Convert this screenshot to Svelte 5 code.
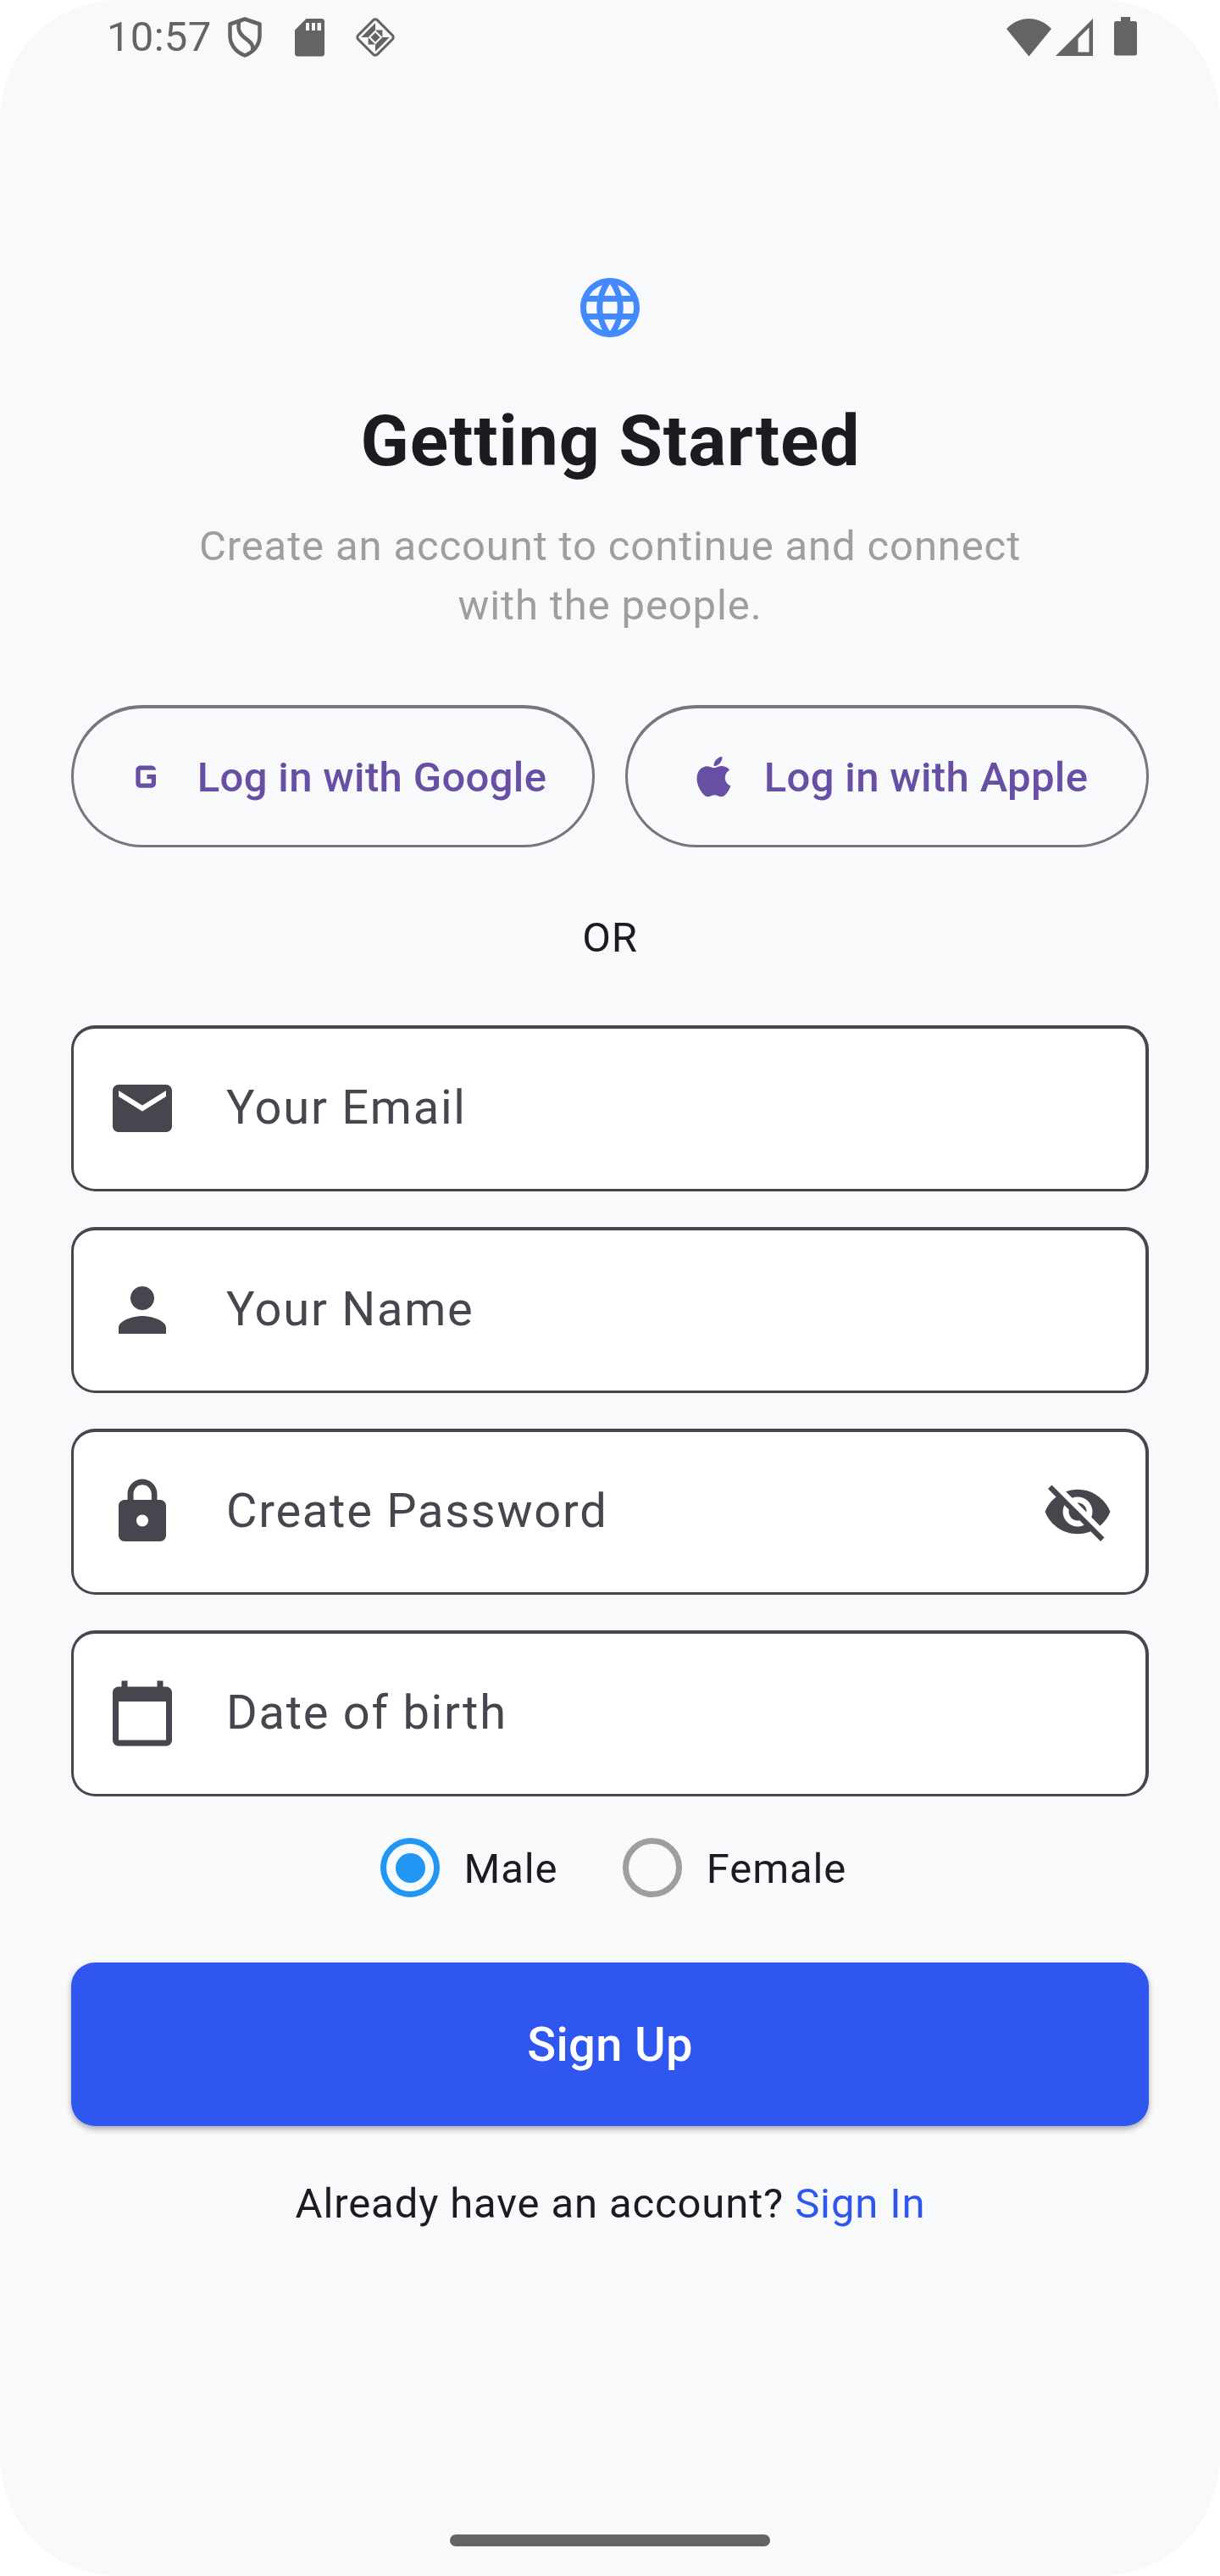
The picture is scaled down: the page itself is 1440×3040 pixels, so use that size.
<script>
  const fields = [
    { icon: 'mail', label: 'Your Email' },
    { icon: 'person', label: 'Your Name' },
    { icon: 'lock', label: 'Create Password', hidden: true },
    { icon: 'calendar', label: 'Date of birth' },
  ];

  const icons = {
    mail: 'M20 4H4c-1.1 0-1.99.9-1.99 2L2 18c0 1.1.9 2 2 2h16c1.1 0 2-.9 2-2V6c0-1.1-.9-2-2-2zm0 4l-8 5-8-5V6l8 5 8-5v2z',
    person: 'M12 12c2.21 0 4-1.79 4-4s-1.79-4-4-4-4 1.79-4 4 1.79 4 4 4zm0 2c-2.67 0-8 1.34-8 4v2h16v-2c0-2.66-5.33-4-8-4z',
    lock: 'M18 8h-1V6c0-2.76-2.24-5-5-5S7 3.24 7 6v2H6c-1.1 0-2 .9-2 2v10c0 1.1.9 2 2 2h12c1.1 0 2-.9 2-2V10c0-1.1-.9-2-2-2zm-6 9c-1.1 0-2-.9-2-2s.9-2 2-2 2 .9 2 2-.9 2-2 2zM9 8V6c0-1.71 1.29-3.1 3-3.1s3.1 1.39 3.1 3.1v2H9z',
    calendar: 'M20 3h-1V1h-2v2H7V1H5v2H4c-1.1 0-2 .9-2 2v16c0 1.1.9 2 2 2h16c1.1 0 2-.9 2-2V5c0-1.1-.9-2-2-2zm0 18H4V8h16v13z',
  };

  let gender = $state('Male');
</script>

<div class="screen">
  <header class="status">
    <span class="time">10:57</span>
    <svg class="shield" viewBox="0 0 40 48" fill="none" stroke="currentColor" stroke-width="4.5" stroke-linejoin="round">
      <path d="M20 2.500L2.500 8.500V22C2.500 33 9.500 41.500 20 45.500C30.500 41.500 37.500 33 37.500 22V8.500Z" />
      <path d="M13.500 4C11.500 13 12.500 18.500 18.500 23.500C26 29.500 31 32 29 40" />
    </svg>
    <svg class="sd" viewBox="0 0 35 45" fill="currentColor">
      <path fill-rule="evenodd" d="M13.500 0H31.500A3.500 3.500 0 0 1 35 3.500V41A3.500 3.500 0 0 1 31.500 44.500H3.500A3.500 3.500 0 0 1 0 41V13.500ZM13 5V14H17V5ZM20 5V14H24V5ZM26.500 5V14H31V5Z" />
    </svg>
    <svg class="diamond" viewBox="0 0 50 50">
      <rect x="9" y="9" width="32" height="32" rx="3.500" transform="rotate(45 25 25)" fill="none" stroke="currentColor" stroke-width="3" />
      <path fill="currentColor" d="M25 8.300V16.600H16.700ZM16.700 16.600V25H8.300ZM33.400 25H41.700L33.400 33.400ZM25 33.400H33.400L25 41.700ZM16.700 16.600H25L16.700 25ZM25 16.600H33.400V25ZM16.700 25L25 33.400H16.700ZM33.400 25V33.400H25ZM25 19.500L30.500 25L25 30.500L19.500 25Z" />
    </svg>
    <span class="spacer"></span>
    <svg class="wifi" viewBox="0 0 53 45" fill="currentColor"><path d="M26.500 44.500L0 12C15 -4 38 -4 53 12Z" /></svg>
    <svg class="signal" viewBox="0 0 44 44" fill="currentColor"><path fill-rule="evenodd" d="M44 0V44H0ZM39.500 10.500L26.500 23.500V39.500H39.500Z" /></svg>
    <svg class="battery" viewBox="0 0 27 46" fill="currentColor"><path d="M8 0H19V5H24.500A2.500 2.500 0 0 1 27 7.500V43A2.500 2.500 0 0 1 24.500 45.500H2.500A2.500 2.500 0 0 1 0 43V7.500A2.500 2.500 0 0 1 2.500 5H8Z" /></svg>
  </header>

  <main>
    <svg class="globe" viewBox="0 0 24 24" fill="currentColor">
      <path d="M11.990 2C6.470 2 2 6.480 2 12s4.470 10 9.990 10C17.520 22 22 17.520 22 12S17.520 2 11.990 2zm6.930 6h-2.950c-.320-1.250-.780-2.450-1.380-3.560 1.840.630 3.370 1.910 4.330 3.560zM12 4.040c.830 1.200 1.480 2.530 1.910 3.960h-3.820c.430-1.430 1.080-2.760 1.910-3.960zM4.260 14C4.100 13.360 4 12.690 4 12s.100-1.360.260-2h3.380c-.080.660-.140 1.320-.140 2 0 .680.060 1.340.140 2H4.260zm.820 2h2.950c.320 1.250.780 2.450 1.380 3.560-1.840-.630-3.370-1.900-4.330-3.560zm2.950-8H5.080c.960-1.660 2.490-2.930 4.330-3.560C8.810 5.550 8.350 6.750 8.030 8zM12 19.960c-.830-1.200-1.480-2.530-1.910-3.960h3.820c-.430 1.430-1.080 2.760-1.910 3.960zM14.340 14H9.660c-.090-.660-.160-1.320-.160-2 0-.680.070-1.350.160-2h4.680c.090.650.160 1.320.160 2 0 .680-.070 1.340-.160 2zm.250 5.560c.600-1.110 1.060-2.310 1.380-3.560h2.950c-.960 1.650-2.490 2.930-4.330 3.560zM16.360 14c.080-.660.140-1.320.140-2 0-.680-.060-1.340-.140-2h3.380c.160.640.260 1.310.260 2s-.100 1.360-.260 2h-3.380z" />
    </svg>
    <h1>Getting Started</h1>
    <p class="subtitle">Create an account to continue and connect<br />with the people.</p>

    <div class="social">
      <button>
        <svg viewBox="0 0 24 24" fill="currentColor"><path d="M16 9H9v6h5v-2h-2v-2h4v4c0 1.100-.900 2-2 2H9c-1.100 0-2-.900-2-2V9c0-1.100.900-2 2-2h5c1.100 0 2 .900 2 2z" /></svg>
        <span>Log in with Google</span>
      </button>
      <button>
        <svg viewBox="0 0 24 24" fill="currentColor"><path d="M17.050 20.280c-.980.950-2.050.800-3.080.350-1.090-.460-2.090-.480-3.240 0-1.440.620-2.200.440-3.060-.350C2.790 15.250 3.510 7.590 9.050 7.310c1.350.070 2.290.740 3.080.800 1.180-.240 2.310-.930 3.570-.840 1.510.120 2.650.720 3.400 1.800-3.120 1.870-2.380 5.980.480 7.130-.570 1.500-1.310 2.990-2.540 4.090zM12.030 7.250c-.150-2.230 1.660-4.070 3.740-4.250.290 2.580-2.340 4.500-3.740 4.250z" /></svg>
        <span>Log in with Apple</span>
      </button>
    </div>

    <p class="or">OR</p>

    <div class="fields">
      {#each fields as field}
        <div class="field">
          <svg viewBox="0 0 24 24" fill="currentColor"><path d={icons[field.icon]} /></svg>
          <span class="label">{field.label}</span>
          {#if field.hidden}
            <svg viewBox="0 0 24 24" fill="currentColor"><path d="M12 7c2.760 0 5 2.240 5 5 0 .650-.130 1.260-.360 1.830l2.920 2.920c1.510-1.260 2.700-2.890 3.430-4.750-1.730-4.390-6-7.500-11-7.500-1.400 0-2.740.250-3.980.700l2.160 2.160C10.740 7.130 11.350 7 12 7zM2 4.270l2.280 2.280.460.460C3.080 8.300 1.780 10.020 1 12c1.730 4.390 6 7.500 11 7.500 1.550 0 3.030-.300 4.380-.840l.420.420L19.730 22 21 20.730 3.270 3 2 4.270zM7.530 9.800l1.550 1.550c-.050.210-.080.430-.080.650 0 1.660 1.340 3 3 3 .220 0 .440-.030.650-.080l1.550 1.550c-.670.330-1.410.530-2.200.530-2.760 0-5-2.240-5-5 0-.790.200-1.530.530-2.200zm4.310-.780l3.150 3.150.020-.160c0-1.660-1.340-3-3-3l-.170.010z" /></svg>
          {/if}
        </div>
      {/each}
    </div>

    <div class="genders" role="radiogroup">
      {#each ['Male', 'Female'] as option}
        <button class="gender" role="radio" aria-checked={gender === option} onclick={() => (gender = option)}>
          <span class="ring" class:selected={gender === option}></span>
          <span class="option">{option}</span>
        </button>
      {/each}
    </div>

    <button class="submit">Sign Up</button>
    <p class="signin">Already have an account? <span>Sign In</span></p>
  </main>

  <div class="home"></div>
</div>

<style>
  :global(body) {
    margin: 0;
    background: #fff;
  }

  .screen {
    box-sizing: border-box;
    width: 1440px;
    height: 3040px;
    display: flex;
    flex-direction: column;
    overflow: hidden;
    border-radius: 140px;
    background: #f8f9fb;
    color: #1d1b20;
    font: 400 49px/70px Roboto, sans-serif;
    letter-spacing: 0.875px;
  }

  svg {
    display: block;
    flex: none;
  }

  p, h1 {
    margin: 0;
    text-align: center;
  }

  button {
    border: 0;
    padding: 0;
    background: none;
    color: inherit;
    font: inherit;
    letter-spacing: inherit;
  }

  .status {
    display: flex;
    align-items: center;
    height: 88px;
    padding: 0 98px 0 126px;
    color: #636563;
  }

  .time {
    width: 143px;
    letter-spacing: 0.3px;
    white-space: nowrap;
  }

  .spacer { flex: 1; }
  .shield { width: 40px; height: 48px; }
  .sd { width: 35px; height: 45px; margin-left: 39px; }
  .diamond { width: 50px; height: 50px; margin-left: 34.5px; }
  .wifi { width: 53px; height: 45px; }
  .signal { width: 44px; height: 44px; margin-left: 5px; }
  .battery { width: 27px; height: 46px; margin: 0 0 3px 25px; }

  main {
    display: flex;
    flex-direction: column;
    padding: 233px 84px 0;
  }

  .globe {
    width: 84px;
    height: 84px;
    align-self: center;
    color: #448aff;
  }

  h1 {
    margin-top: 67px;
    padding-left: 1px;
    font-size: 84px;
    font-weight: 700;
    line-height: 98px;
  }

  .subtitle {
    margin-top: 40px;
    color: #9e9e9e;
  }

  .social {
    display: grid;
    grid-template-columns: 1fr 1fr;
    gap: 36px;
    margin-top: 82px;
  }

  .social button {
    box-sizing: border-box;
    height: 168px;
    display: flex;
    align-items: center;
    justify-content: center;
    gap: 28px;
    padding-left: 1px;
    border: solid #79747e;
    border-width: 4px 3px 3px;
    border-radius: 84px;
    color: #6750a4;
    font-weight: 500;
    letter-spacing: 0.35px;
    white-space: nowrap;
  }

  .social span { padding-top: 2px; }

  .social svg {
    width: 63px;
    height: 63px;
  }

  .or { margin-top: 72px; }

  .fields {
    display: flex;
    flex-direction: column;
    gap: 42px;
    margin-top: 68px;
  }

  .field {
    box-sizing: border-box;
    height: 196px;
    display: flex;
    align-items: center;
    padding: 0 38px 1px 39px;
    border: solid #49454f;
    border-width: 4px 4px 3px 3px;
    border-radius: 28px;
    background: #fff;
    color: #49454f;
    font-size: 56px;
    letter-spacing: 1.75px;
  }

  .field svg {
    width: 84px;
    height: 84px;
  }

  .label {
    flex: 1;
    margin-left: 57px;
    padding-bottom: 2px;
  }

  .genders {
    display: flex;
    gap: 77px;
    height: 168px;
    margin-left: 365px;
  }

  .gender {
    display: flex;
    align-items: center;
    gap: 28.5px;
  }

  .option { padding-top: 3px; }

  .ring {
    box-sizing: border-box;
    width: 70px;
    height: 70px;
    display: grid;
    place-items: center;
    border: 7px solid #9e9e9e;
    border-radius: 50%;
  }

  .selected { border-color: #2196f3; }

  .selected::after {
    content: '';
    width: 35px;
    height: 35px;
    border-radius: 50%;
    background: #2196f3;
  }

  .submit {
    height: 193px;
    margin-top: 28px;
    border-radius: 28px;
    background: #3056f0;
    box-shadow: 0 4px 6px #00000040, 0 2px 10px #00000014;
    color: #fff;
    font-size: 56px;
    font-weight: 500;
    letter-spacing: 0.35px;
  }

  .signin {
    margin-top: 57px;
    padding-left: 1px;
  }

  .signin span { color: #3056f0; }

  .home {
    width: 378px;
    height: 14px;
    margin: auto auto 35px;
    border-radius: 7px;
    background: #636563;
  }
</style>
